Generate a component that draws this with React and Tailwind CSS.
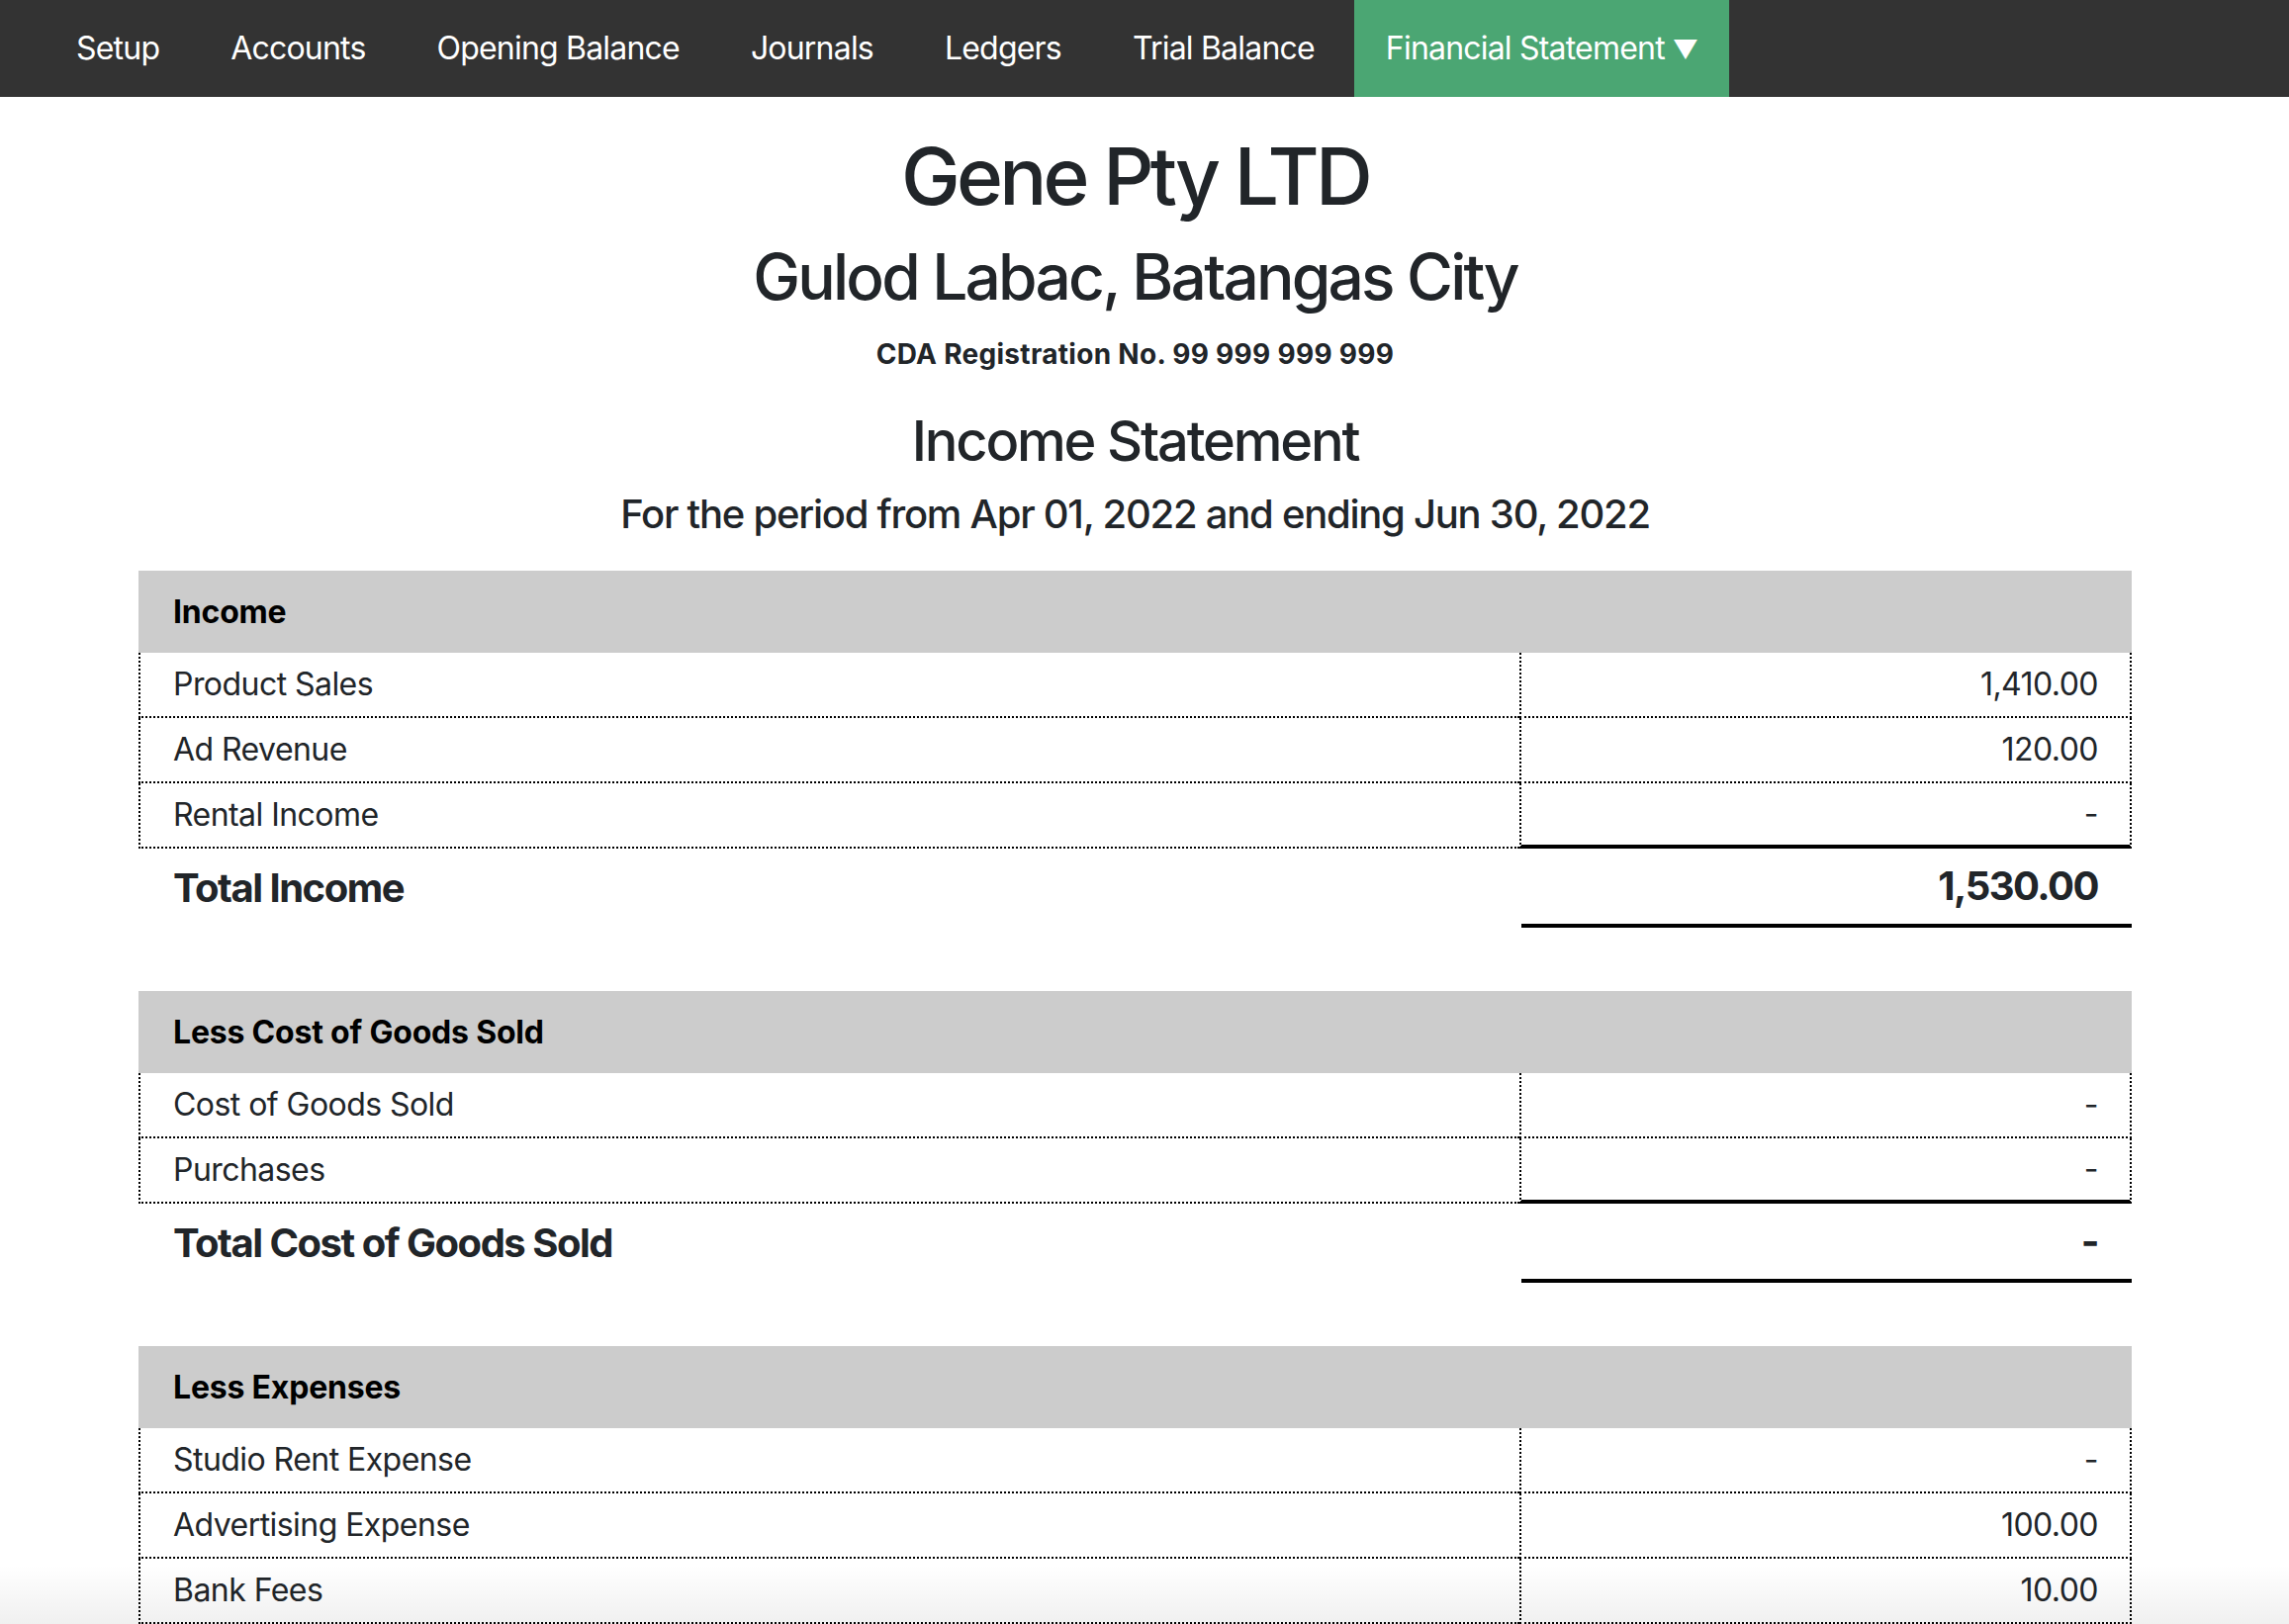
import React from "react";

const navItems = ["Setup", "Accounts", "Opening Balance", "Journals", "Ledgers", "Trial Balance"];

const sections = [
  {
    title: "Income",
    rows: [
      ["Product Sales", "1,410.00"],
      ["Ad Revenue", "120.00"],
      ["Rental Income", "-"],
    ],
    total: ["Total Income", "1,530.00"],
  },
  {
    title: "Less Cost of Goods Sold",
    rows: [
      ["Cost of Goods Sold", "-"],
      ["Purchases", "-"],
    ],
    total: ["Total Cost of Goods Sold", "-"],
  },
  {
    title: "Less Expenses",
    rows: [
      ["Studio Rent Expense", "-"],
      ["Advertising Expense", "100.00"],
      ["Bank Fees", "10.00"],
    ],
    total: null,
  },
];

function Section({ section, first }) {
  return (
    <div className={first ? "" : "mt-[64px]"}>
      <div className="h-[83px] bg-[#cccccc] flex items-center pl-[35px] text-[32px] leading-[38px] font-bold tracking-[-0.2px] text-black">
        {section.title}
      </div>
      {section.rows.map(([label, amount], i) => {
        const last = i === section.rows.length - 1 && section.total;
        return (
          <div key={label} className="flex h-[66px]">
            <div className="flex-1 flex items-center pl-[33px] border-l-2 border-b-2 border-dotted border-black text-[32px] leading-[38px] tracking-[-0.55px] text-[#212529]">
              {label}
            </div>
            {last ? (
              <div className="w-[619px] flex items-center justify-end pr-[32px] border-l-2 border-r-2 border-dotted border-black border-b-[4px] [border-bottom-style:solid] text-[32px] leading-[38px] tracking-[-0.55px] text-[#212529]">
                {amount}
              </div>
            ) : (
              <div className="w-[619px] flex items-center justify-end pr-[32px] border-l-2 border-r-2 border-b-2 border-dotted border-black text-[32px] leading-[38px] tracking-[-0.55px] text-[#212529]">
                {amount}
              </div>
            )}
          </div>
        );
      })}
      {section.total && (
        <div className="flex h-[80px]">
          <div className="flex-1 flex items-center pl-[35px] text-[40px] leading-[48px] font-bold tracking-[-1.5px] text-[#212529]">
            {section.total[0]}
          </div>
          <div className="w-[617px] flex items-center justify-end pr-[34px] border-b-[4px] border-solid border-black text-[40px] leading-[48px] font-bold tracking-[-1.5px] text-[#212529]">
            {section.total[1]}
          </div>
        </div>
      )}
    </div>
  );
}

export default function App() {
  return (
    <div
      className="w-[2314px] h-[1642px] overflow-hidden bg-white relative"
      style={{ fontFamily: "Inter, 'Noto Sans', 'Liberation Sans', sans-serif" }}
    >
      <nav className="w-full h-[98px] bg-[#333333] flex items-stretch pl-[45px] gap-[8px]">
        {navItems.map((item) => (
          <div key={item} className="flex items-center px-[32px] text-[32px] tracking-[-0.8px] text-white">
            {item}
          </div>
        ))}
        <div className="flex items-center px-[32px] text-[32px] tracking-[-0.8px] text-white bg-[#4ba673]">
          Financial Statement <span className="ml-[8px] text-[26px]">▼</span>
        </div>
      </nav>

      <div className="w-[2295px] text-center text-[#212529]">
        <h1 className="mt-[32px] text-[80px] leading-[96px] font-medium tracking-[-3.8px]">Gene Pty LTD</h1>
        <h2 className="mt-[15px] text-[64px] leading-[77px] font-medium tracking-[-2.8px]">Gulod Labac, Batangas City</h2>
        <h6 className="mt-[23px] text-[28px] leading-[34px] font-bold tracking-[0.3px]">CDA Registration No. 99 999 999 999</h6>
        <h3 className="mt-[38px] text-[56px] leading-[67px] font-medium tracking-[-2.2px]">Income Statement</h3>
        <h5 className="mt-[16px] text-[40px] leading-[48px] font-medium tracking-[-1.25px]">
          For the period from Apr 01, 2022 and ending Jun 30, 2022
        </h5>
      </div>

      <div className="w-[2295px] px-[140px] mt-[33px]">
        {sections.map((s, i) => (
          <Section key={s.title} section={s} first={i === 0} />
        ))}
      </div>

      <div className="absolute left-0 bottom-0 w-full h-[60px] bg-gradient-to-b from-transparent to-[rgba(0,0,0,0.06)] pointer-events-none" />
    </div>
  );
}
